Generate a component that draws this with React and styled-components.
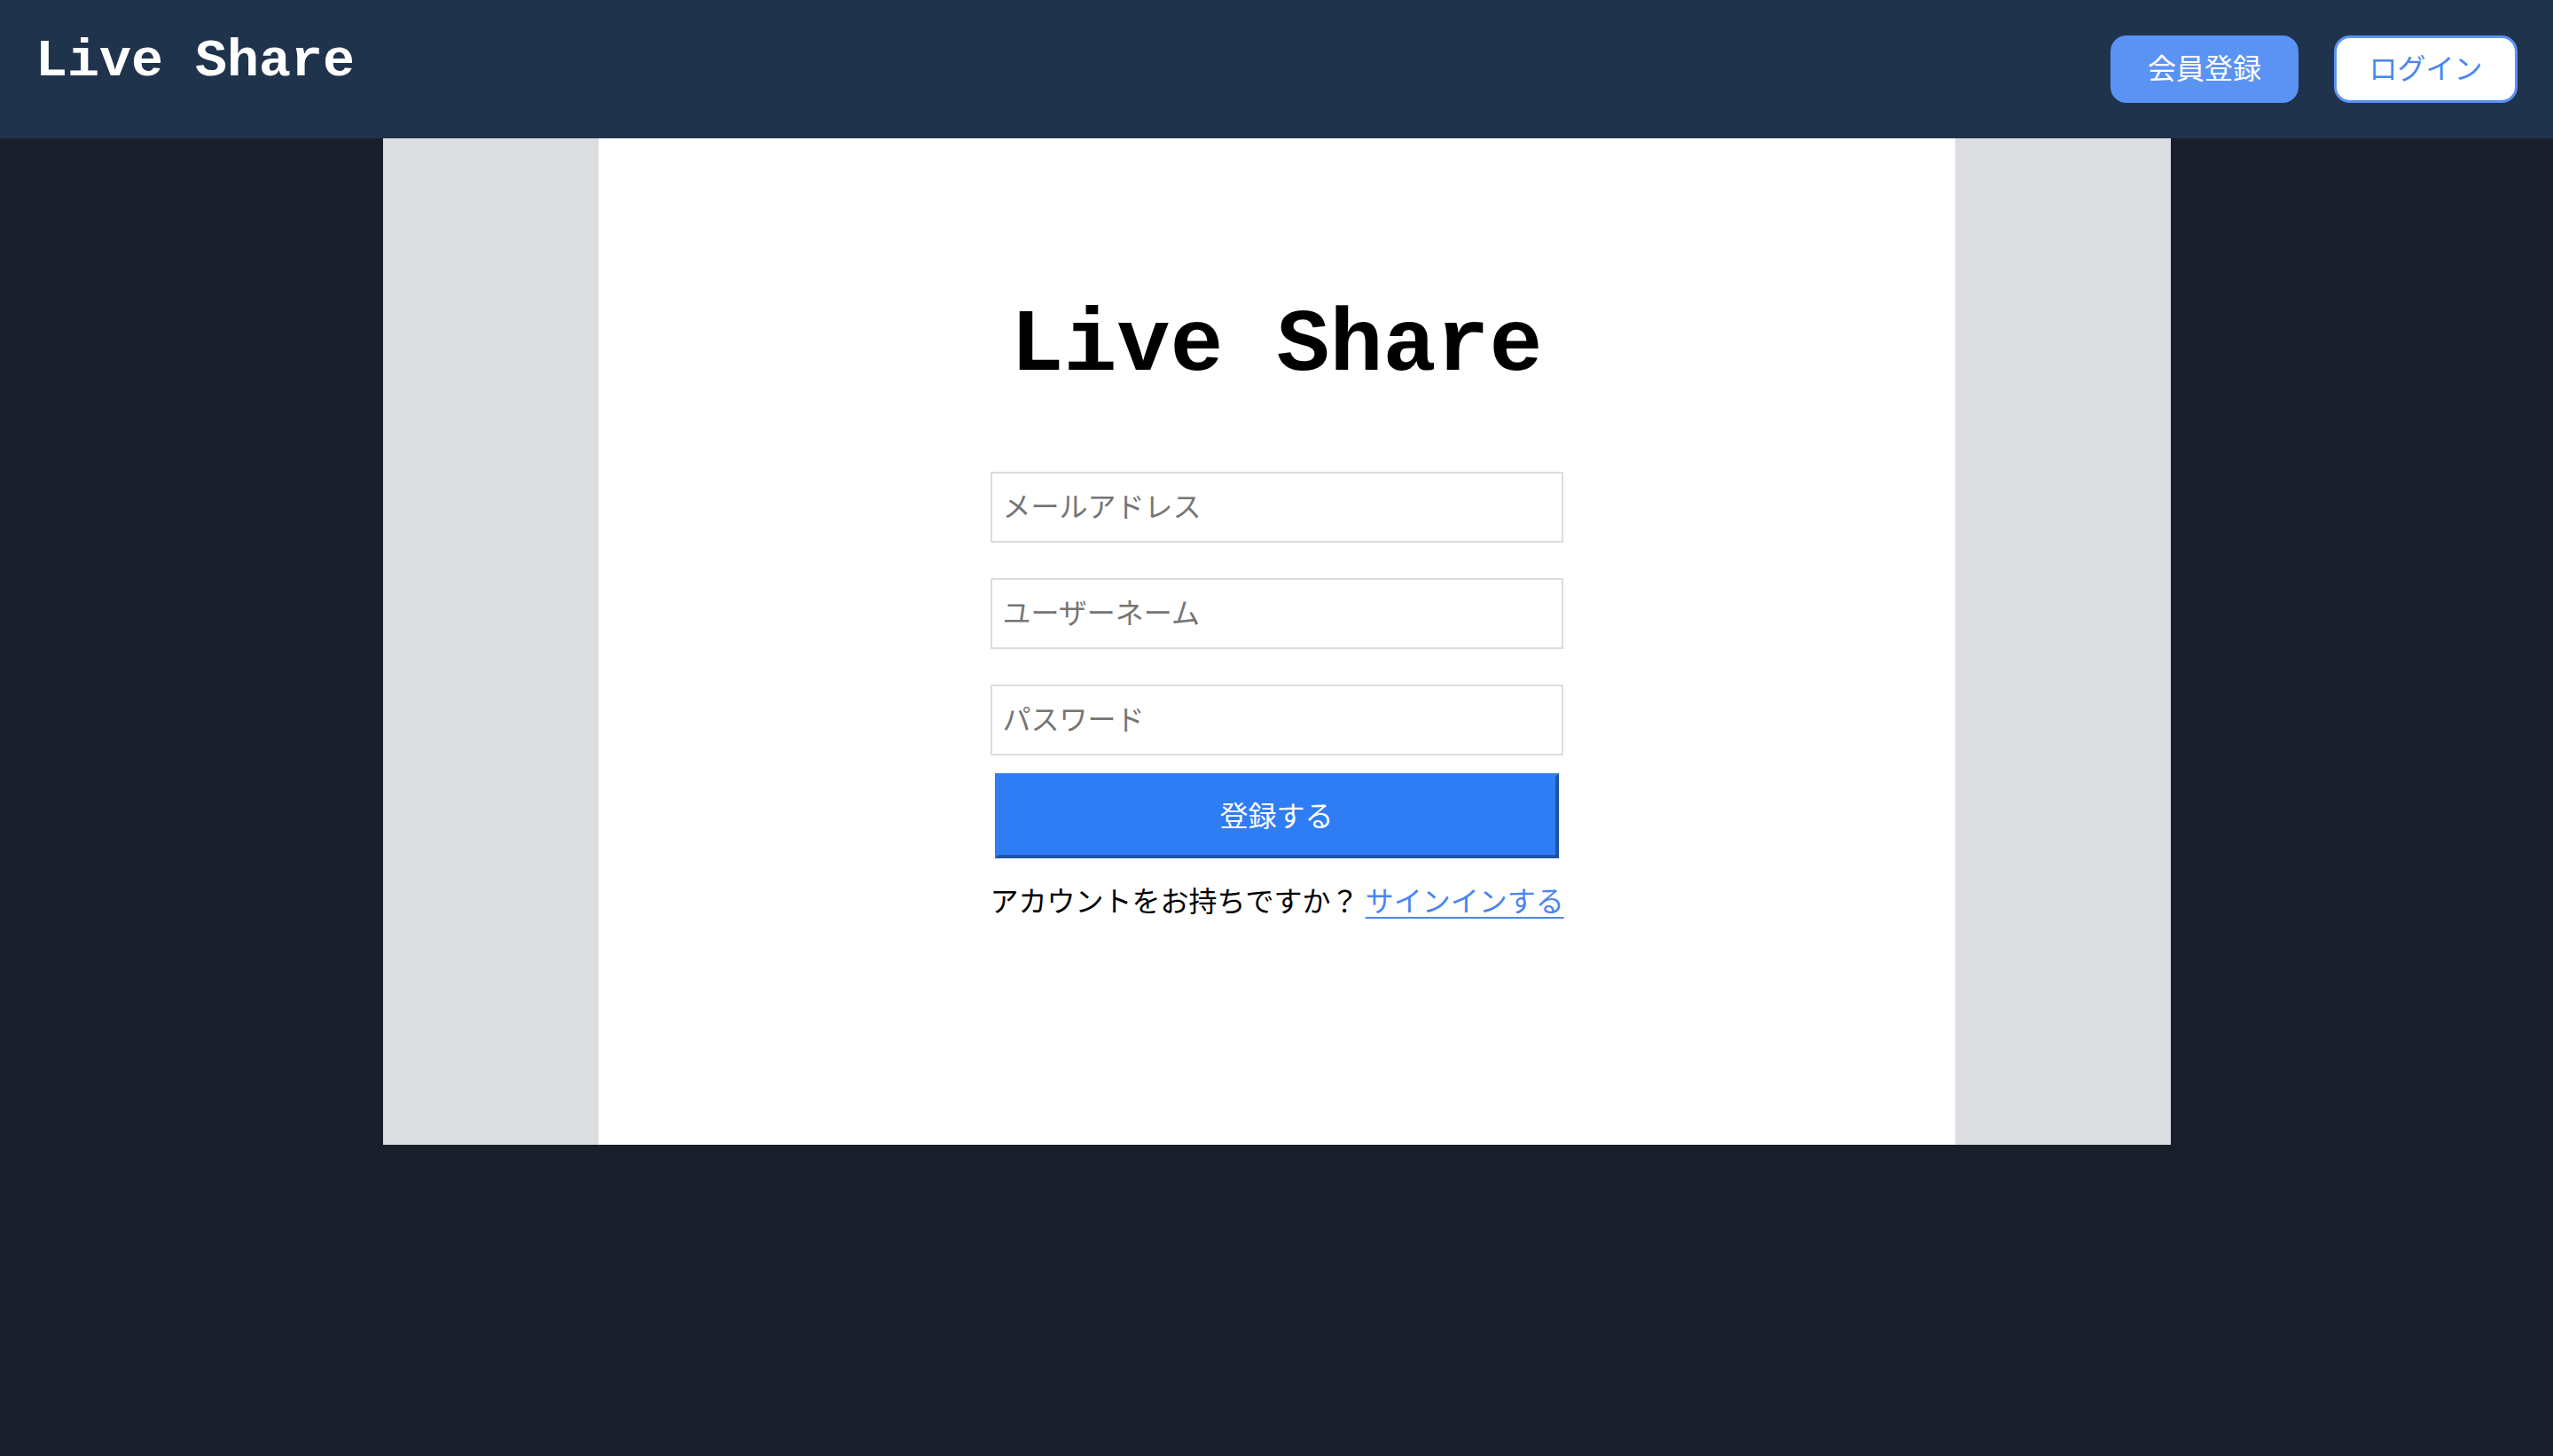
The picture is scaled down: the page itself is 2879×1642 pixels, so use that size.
import React from "react";
import styled, { createGlobalStyle } from "styled-components";

const GlobalStyle = createGlobalStyle`
  html, body {
    margin: 0;
    padding: 0;
    background: #181f2a;
  }
  body {
    font-family: "Noto Sans CJK JP", "Noto Sans", sans-serif;
    min-height: 1642px;
  }
  * { box-sizing: border-box; }
`;

const Header = styled.header`
  height: 156px;
  background: #20334d;
  display: flex;
  align-items: center;
  justify-content: space-between;
  padding: 0 40px;
`;

const Logo = styled.div`
  font-family: "Courier New", "Liberation Mono", monospace;
  font-weight: 700;
  font-size: 60px;
  color: #ffffff;
  line-height: 1;
  margin-top: -18px;
`;

const Nav = styled.nav`
  display: flex;
  gap: 40px;
  align-items: center;
`;

const NavButton = styled.button`
  height: 76px;
  width: ${(p) => p.$width}px;
  border-radius: 18px;
  font-family: "Noto Sans CJK JP", sans-serif;
  font-size: 32px;
  line-height: 1;
  cursor: pointer;
  border: 3px solid #5b93f5;
  background: ${(p) => (p.$primary ? "#5b93f5" : "#ffffff")};
  color: ${(p) => (p.$primary ? "#ffffff" : "#4a86ee")};
  display: flex;
  align-items: center;
  justify-content: center;
  padding: 0 0 6px;
`;

const Main = styled.main`
  width: 2016px;
  height: 1135px;
  margin: 0 auto;
  background: #dddee2;
  padding: 0 243px;
`;

const Panel = styled.section`
  height: 100%;
  background: #ffffff;
  display: flex;
  flex-direction: column;
  align-items: center;
  padding-top: 185px;
`;

const Title = styled.h1`
  margin: 0;
  font-family: "Courier New", "Liberation Mono", monospace;
  font-weight: 700;
  font-size: 100px;
  line-height: 1;
  color: #000;
`;

const Form = styled.form`
  width: 646px;
  margin-top: 91px;
  display: flex;
  flex-direction: column;
`;

const Input = styled.input`
  width: 100%;
  height: 80px;
  border: 2px solid #dcdce0;
  padding: 0 12px 6px;
  font-family: "Noto Sans CJK JP", sans-serif;
  font-size: 32px;
  color: #222;
  outline: none;
  margin-bottom: ${(p) => (p.$last ? "20px" : "40px")};
  &::placeholder {
    color: #757575;
  }
`;

const Submit = styled.button`
  width: 636px;
  height: 96px;
  align-self: center;
  background: #2f7df5;
  color: #ffffff;
  border: 4px solid;
  border-color: #2f7df5 #1f54a5 #1f54a5 #2f7df5;
  font-family: "Noto Sans CJK JP", sans-serif;
  font-size: 32px;
  cursor: pointer;
  padding: 0 0 4px;
`;

const Footer = styled.p`
  margin: 22px 0 0;
  font-family: "Noto Sans CJK JP", sans-serif;
  font-size: 32px;
  color: #000;
  white-space: nowrap;
  line-height: 48px;
`;

const Link = styled.a`
  color: #4a86ee;
  text-decoration: underline;
  text-underline-offset: 6px;
  text-decoration-thickness: 2px;
`;

export default function App() {
  return (
    <>
      <GlobalStyle />
      <Header>
        <Logo>Live Share</Logo>
        <Nav>
          <NavButton $primary $width={212}>会員登録</NavButton>
          <NavButton $width={207}>ログイン</NavButton>
        </Nav>
      </Header>
      <Main>
        <Panel>
          <Title>Live Share</Title>
          <Form onSubmit={(e) => e.preventDefault()}>
            <Input type="email" placeholder="メールアドレス" />
            <Input type="text" placeholder="ユーザーネーム" />
            <Input type="password" placeholder="パスワード" $last />
            <Submit type="submit">登録する</Submit>
            <Footer>
              アカウントをお持ちですか？ <Link href="#">サインインする</Link>
            </Footer>
          </Form>
        </Panel>
      </Main>
    </>
  );
}
